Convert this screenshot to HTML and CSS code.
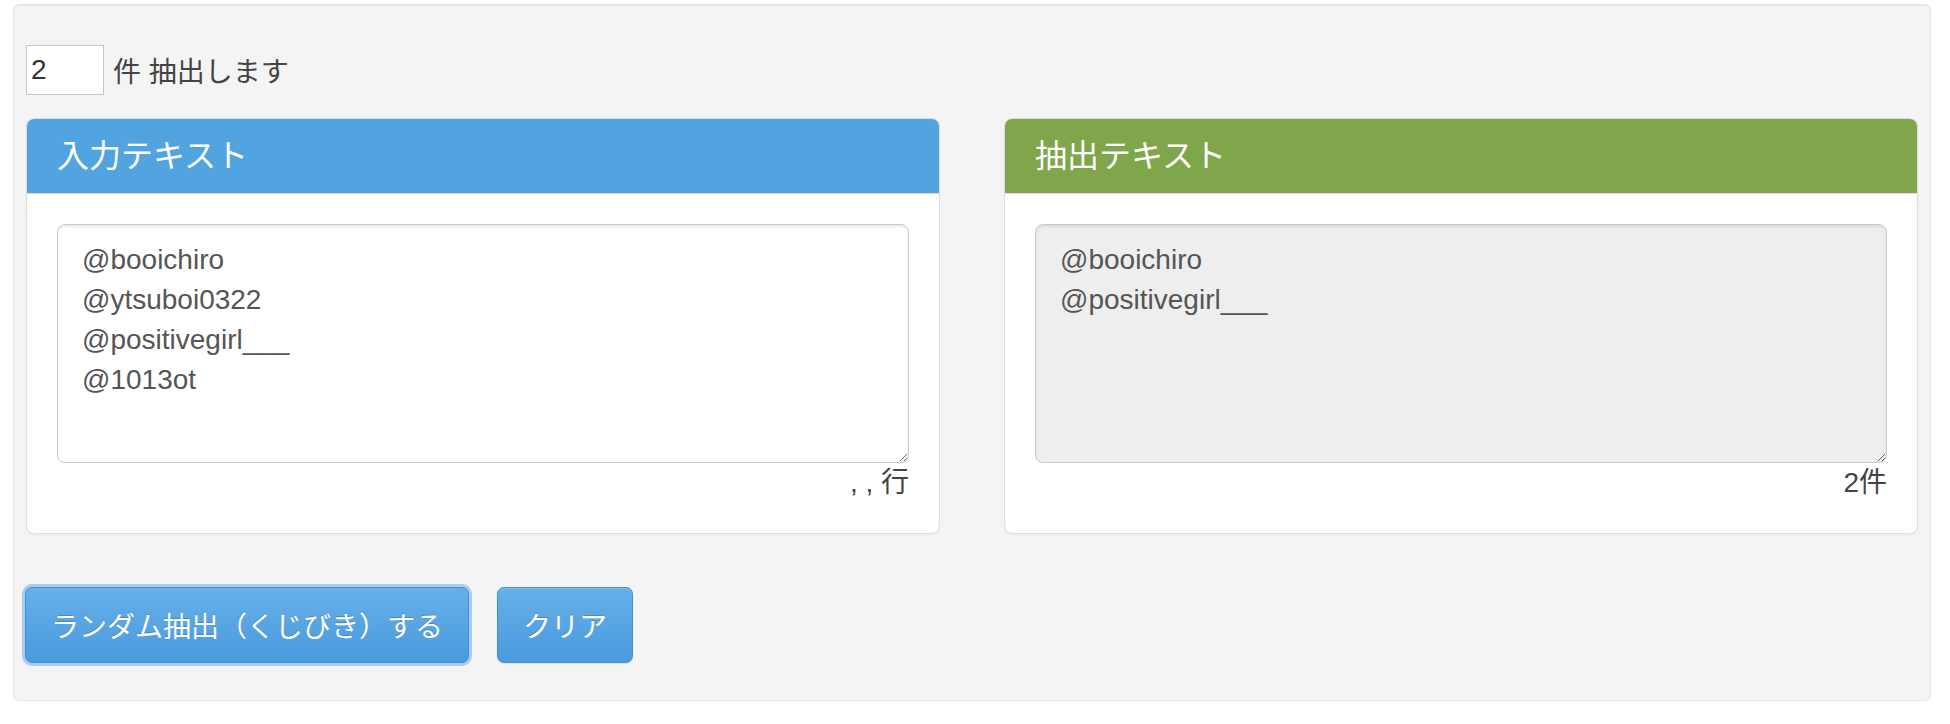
FILE: index.html
```html
<!DOCTYPE html>
<html lang="ja">
<head>
    <meta charset="UTF-8">
    <meta name="viewport" content="width=device-width, initial-scale=1.0">
    <title>ランダム抽出</title>
    <link rel="stylesheet" href="styles.css">
</head>
<body>
    <div class="well">
        <div class="count-row">
            <input type="text" id="count" class="count-input" value="2" />
            <span class="count-label">件 抽出します</span>
        </div>

        <div class="panels">
            <div class="panel panel-input">
                <div class="panel-heading">入力テキスト</div>
                <div class="panel-body">
                    <textarea id="inputText" class="text-box">@booichiro
@ytsuboi0322
@positivegirl___
@1013ot</textarea>
                    <div class="panel-note">, , 行</div>
                </div>
            </div>

            <div class="panel panel-output">
                <div class="panel-heading">抽出テキスト</div>
                <div class="panel-body">
                    <textarea id="outputText" class="text-box" readonly>@booichiro
@positivegirl___</textarea>
                    <div class="panel-note">2件</div>
                </div>
            </div>
        </div>

        <div class="buttons">
            <button class="btn btn-focus">ランダム抽出（くじびき）する</button>
            <button class="btn">クリア</button>
        </div>
    </div>
</body>
</html>
```

FILE: styles.css
```css
body {
    margin: 0;
    background-color: #fff;
    font-family: "Liberation Sans", "Noto Sans CJK JP", sans-serif;
    font-size: 28px;
    color: #333;
}
.well {
    margin: 4px 19px 0 13px;
    padding: 40px 12px 37px 12px;
    background-color: #f4f4f4;
    border: 1px solid #e3e3e3;
    border-radius: 6px;
    box-shadow: inset 0 1px 2px rgba(0, 0, 0, 0.05);
}
.count-row {
    display: flex;
    align-items: center;
    height: 50px;
}
.count-input {
    box-sizing: border-box;
    width: 78px;
    height: 50px;
    margin: 0 9px 0 0;
    padding: 0 4px;
    border: 1px solid #c8c8c8;
    background-color: #fff;
    font-family: inherit;
    font-size: 28px;
    color: #333;
    outline: none;
}
.count-label {
    color: #444;
}
.panels {
    display: grid;
    grid-template-columns: 914px 914px;
    column-gap: 64px;
    margin-top: 23px;
}
.panel {
    background-color: #fff;
    border: 1px solid #ddd;
    border-radius: 8px;
    box-shadow: 0 1px 2px rgba(0, 0, 0, 0.05);
    overflow: hidden;
}
.panel-heading {
    padding: 20px 30px;
    font-size: 32px;
    line-height: 34px;
    color: #fff;
    border-bottom: 1px solid #dcdcdc;
}
.panel-input .panel-heading {
    background-color: #52a4e0;
}
.panel-output .panel-heading {
    background-color: #7fa64a;
}
.panel-body {
    padding: 30px 30px 30px 30px;
}
.text-box {
    display: block;
    box-sizing: border-box;
    width: 100%;
    height: 239px;
    margin: 0;
    padding: 15px 24px;
    border: 1px solid #c8c8c8;
    border-radius: 8px;
    box-shadow: inset 0 2px 2px rgba(0, 0, 0, 0.075);
    font-family: "Liberation Sans", "Noto Sans CJK JP", sans-serif;
    font-size: 28px;
    line-height: 40px;
    color: #555;
    background-color: #fff;
    resize: vertical;
    outline: none;
}
.text-box[readonly] {
    background-color: #eee;
}
.panel-note {
    text-align: right;
    line-height: 40px;
    color: #444;
}
.buttons {
    display: flex;
    gap: 28px;
    margin: 53px 0 0 -1px;
}
.btn {
    box-sizing: border-box;
    height: 76px;
    padding: 0 25px;
    font-family: inherit;
    font-size: 28px;
    color: #fff;
    text-shadow: 0 -1px 0 rgba(0, 0, 0, 0.2);
    background-image: linear-gradient(to bottom, #66b0e8 0%, #4a9ade 100%);
    border: 1px solid #3f8fd6;
    border-radius: 7px;
    box-shadow: inset 0 1px 0 rgba(255, 255, 255, 0.15), 0 1px 1px rgba(0, 0, 0, 0.08);
    cursor: pointer;
}
.btn-focus {
    box-shadow: 0 0 0 3px rgba(110, 170, 240, 0.55);
}
```
